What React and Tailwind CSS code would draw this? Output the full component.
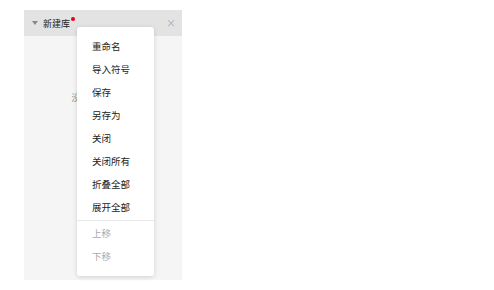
import React from 'react';

const items = [
  { label: '重命名' },
  { label: '导入符号' },
  { label: '保存' },
  { label: '另存为' },
  { label: '关闭' },
  { label: '关闭所有' },
  { label: '折叠全部' },
  { label: '展开全部' },
];

const disabledItems = [{ label: '上移' }, { label: '下移' }];

export default function App() {
  return (
    <div
      className="w-[494px] h-[290px] bg-white relative overflow-hidden"
      style={{ fontFamily: '"Noto Sans CJK SC", "Noto Sans", sans-serif' }}
    >
      {/* library panel */}
      <div className="absolute left-[24px] top-[10px] w-[158px] h-[270px] flex flex-col bg-[#f5f5f5]">
        <div className="h-[26px] flex items-center bg-[#e3e3e3] pl-[8px] pr-[6px] shrink-0">
          <svg width="6" height="4" viewBox="0 0 6 4" className="mr-[5px]">
            <path d="M0 0 L6 0 L3 4 Z" fill="#8a8a8a" />
          </svg>
          <span className="text-[9px] leading-none text-[#222] relative">
            新建库
            <span className="absolute -right-[5px] -top-[2px] w-[4px] h-[4px] rounded-full bg-[#e60012]" />
          </span>
          <span className="ml-auto text-[10px] leading-none text-[#aaa]">×</span>
        </div>
        <div className="flex-1 flex justify-center pt-[57px]">
          <span className="text-[9px] leading-none text-[#888]">没有找到符号库</span>
        </div>
      </div>

      {/* context menu */}
      <div className="absolute left-[77px] top-[27px] w-[77px] py-[8px] bg-white rounded-[3px] shadow-[0_1px_5px_rgba(0,0,0,0.15)]">
        {items.map(({ label }) => (
          <div key={label} className="h-[23px] flex items-center pl-[15px] text-[9.5px] text-[#222] whitespace-nowrap">
            {label}
          </div>
        ))}
        <div className="h-px bg-[#e8e8e8] my-[1px]" />
        {disabledItems.map(({ label }) => (
          <div key={label} className="h-[23px] flex items-center pl-[15px] text-[9.5px] text-[#aaa] whitespace-nowrap">
            {label}
          </div>
        ))}
      </div>
    </div>
  );
}
